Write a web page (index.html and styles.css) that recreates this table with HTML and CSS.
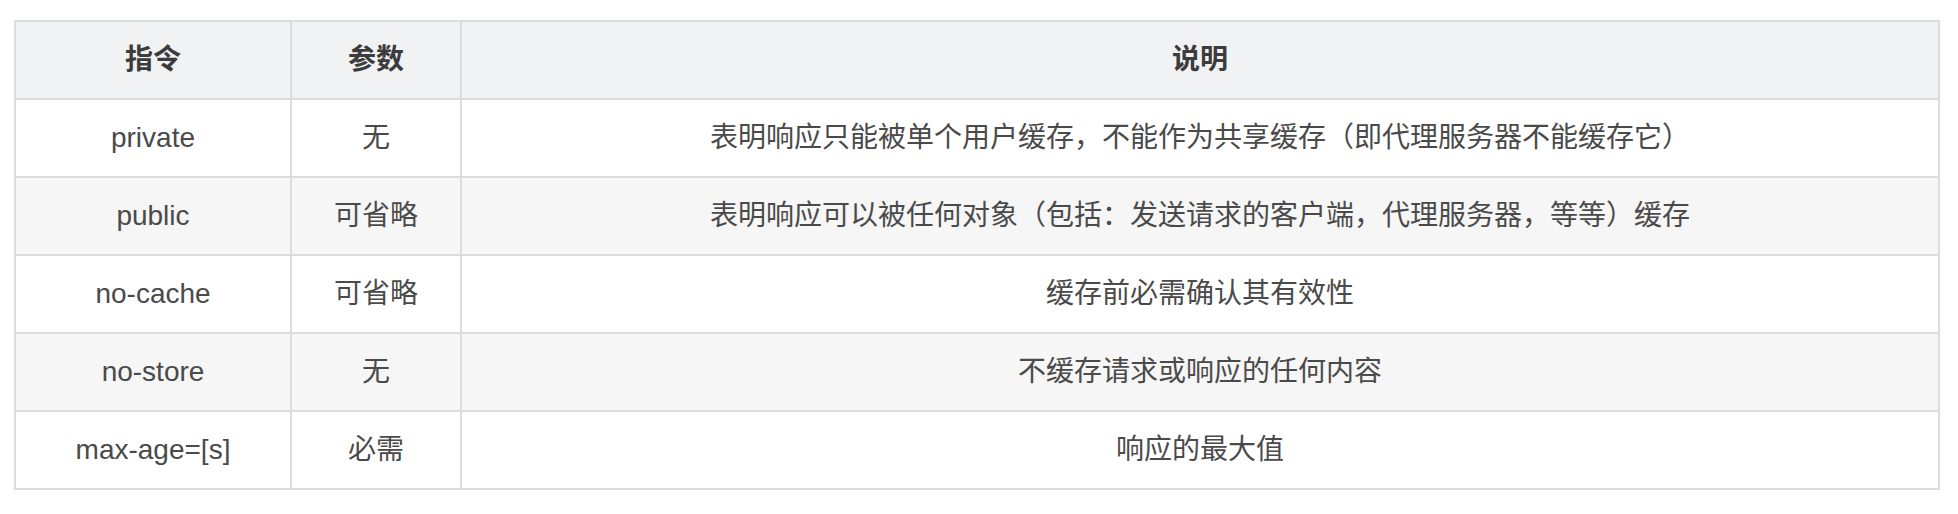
FILE: index.html
```html
<!DOCTYPE html>
<html lang="zh-CN">
<head>
<meta charset="utf-8">
<title>Cache-Control</title>
<link rel="stylesheet" href="styles.css">
</head>
<body>
<div class="page">
  <table class="cc-table">
    <colgroup>
      <col class="c-cmd">
      <col class="c-arg">
      <col class="c-desc">
    </colgroup>
    <thead>
      <tr><th>指令</th><th>参数</th><th>说明</th></tr>
    </thead>
    <tbody>
      <tr><td>private</td><td>无</td><td>表明响应只能被单个用户缓存，不能作为共享缓存（即代理服务器不能缓存它）</td></tr>
      <tr><td>public</td><td>可省略</td><td>表明响应可以被任何对象（包括：发送请求的客户端，代理服务器，等等）缓存</td></tr>
      <tr><td>no-cache</td><td>可省略</td><td>缓存前必需确认其有效性</td></tr>
      <tr><td>no-store</td><td>无</td><td>不缓存请求或响应的任何内容</td></tr>
      <tr><td>max-age=[s]</td><td>必需</td><td>响应的最大值</td></tr>
    </tbody>
  </table>
</div>
</body>
</html>
```

FILE: styles.css
```css
html, body {
  margin: 0;
  padding: 0;
  background: #ffffff;
}

.page {
  padding: 20px 0 0 14px;
}

.cc-table {
  border-collapse: collapse;
  table-layout: fixed;
  width: 1924px;
  font-family: "Liberation Sans", "Noto Sans CJK SC", sans-serif;
  font-size: 28px;
  color: #4a4a4a;
}

.c-cmd { width: 276px; }
.c-arg { width: 170px; }
.c-desc { width: 1478px; }

.cc-table th,
.cc-table td {
  border: 2px solid #dcdcdc;
  height: 76px;
  padding: 0 10px;
  text-align: center;
  vertical-align: middle;
  line-height: 1.2;
  white-space: nowrap;
}

.cc-table th {
  background: #f1f2f4;
  font-weight: bold;
  color: #3c3c3c;
}

.cc-table tbody tr:nth-child(even) td {
  background: #f6f6f6;
}
```
